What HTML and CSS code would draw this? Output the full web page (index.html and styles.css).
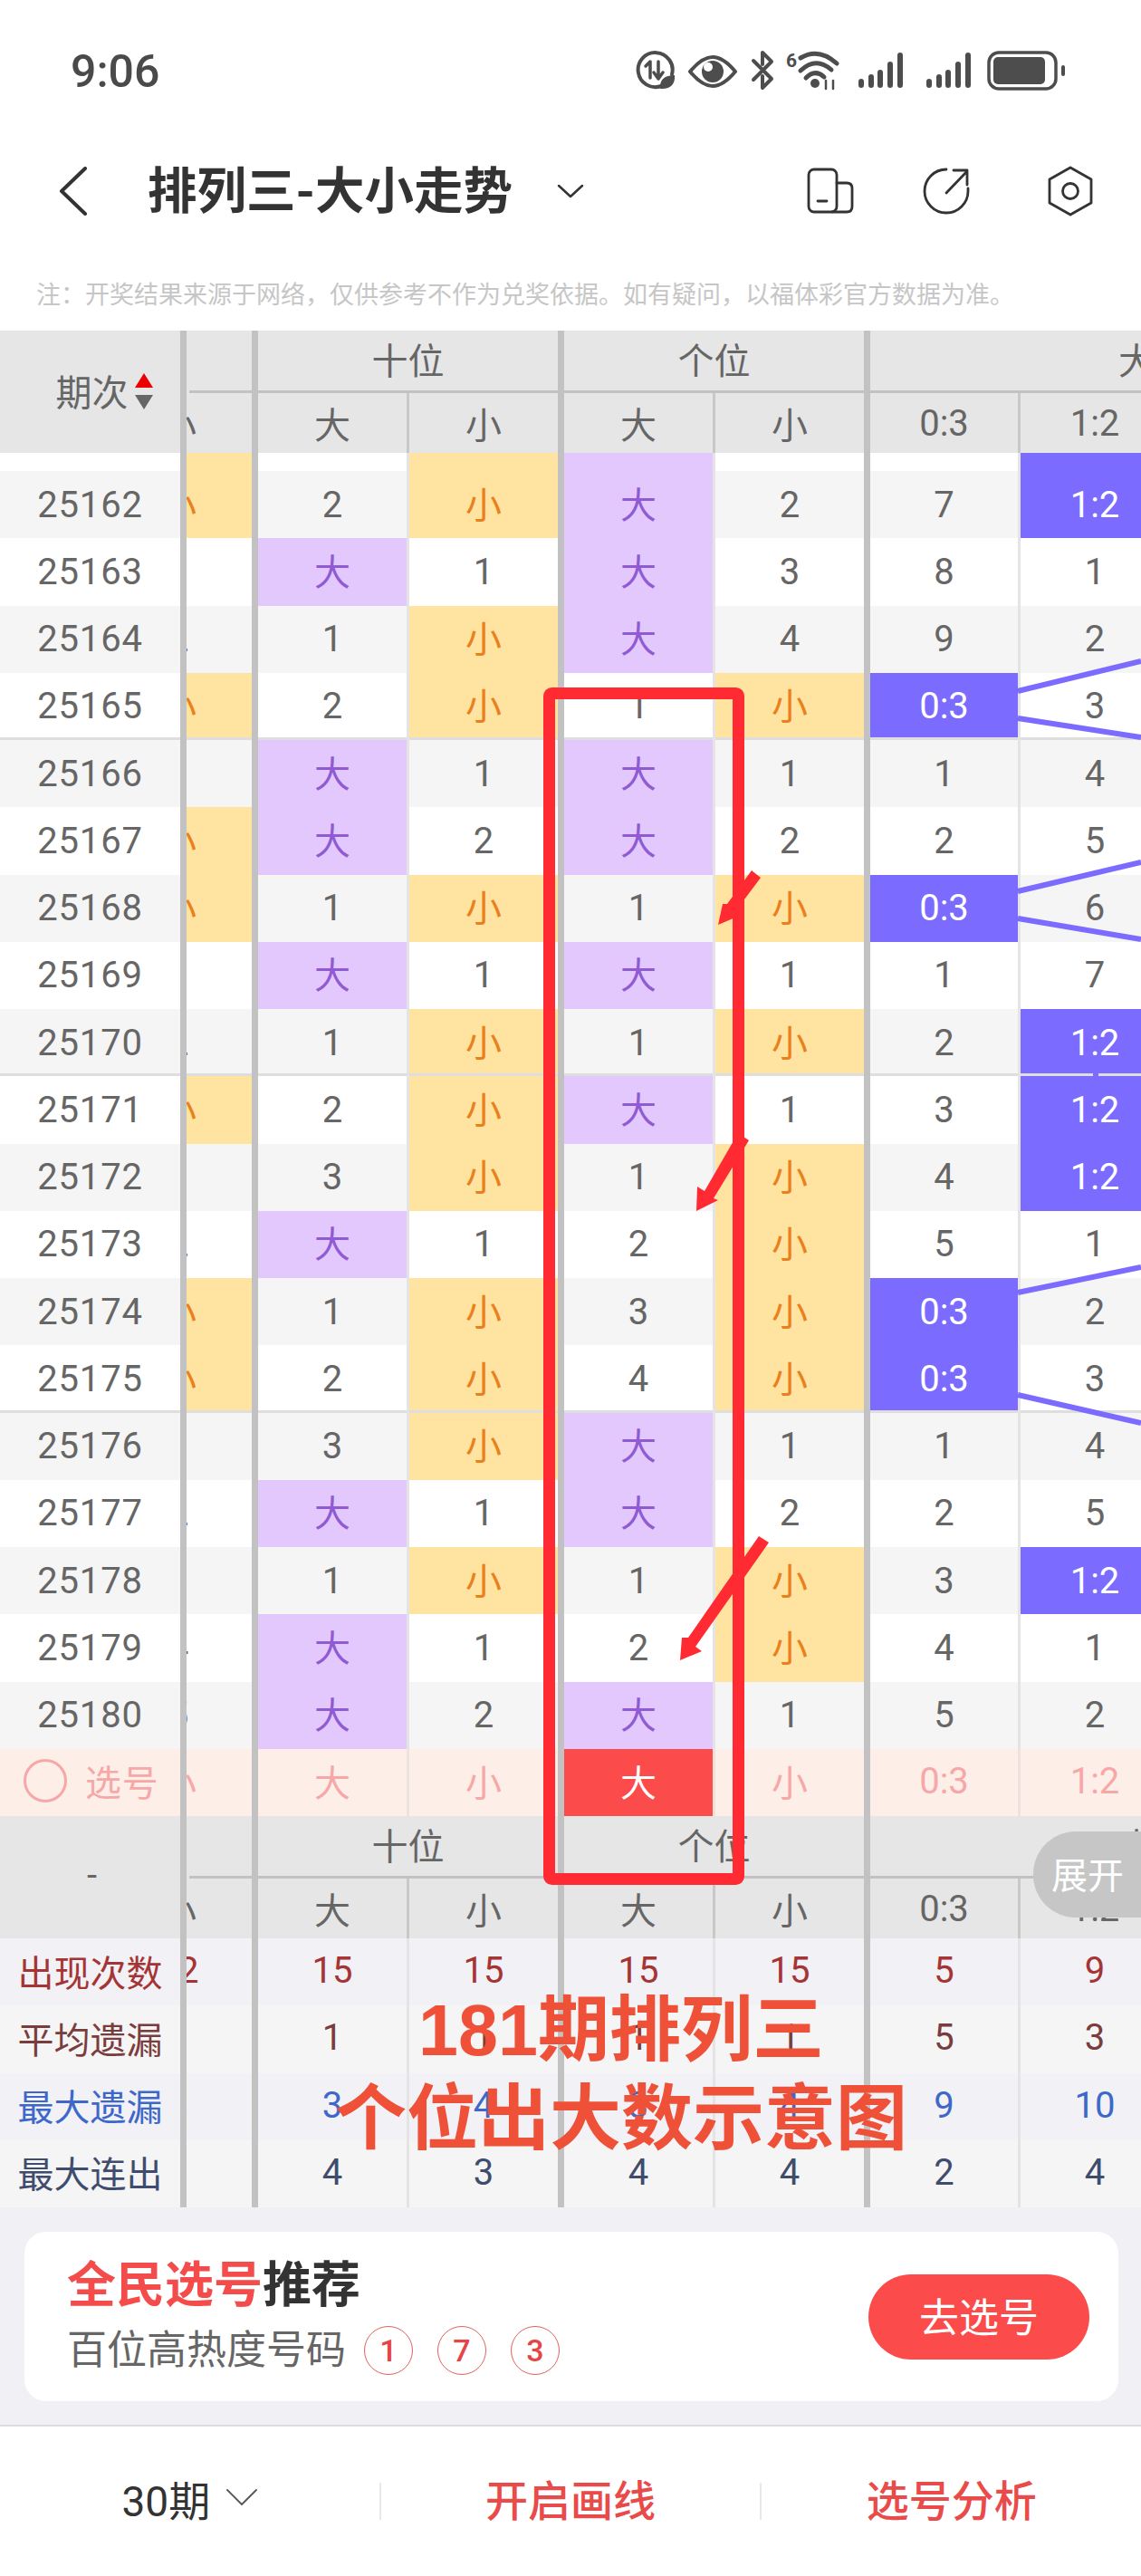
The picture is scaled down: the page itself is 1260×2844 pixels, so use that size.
FILE: index.html
```html
<!DOCTYPE html>
<html lang="zh-CN">
<head>
    <meta charset="UTF-8">
    <meta name="viewport" content="width=device-width, initial-scale=1.0">
    <title>排列三-大小走势</title>
    <link rel="stylesheet" href="styles.css">
</head>
<body>
    <div class="status-bar">
        <span class="status-time">9:06</span>
        <svg class="status-icons" width="520" height="60" viewBox="0 0 520 60" fill="none" stroke="#4d4d4d" stroke-linecap="round" stroke-linejoin="round">
            <path d="M50 55 A19 19 0 1 1 62 42" stroke-width="4"/>
            <path d="M33 33 L38 28 V46 M47 28 V46 M42 40 L47 47 L52 40" stroke-width="3.5"/>
            <path d="M49 58 C48 48 54 43 65 43 C66 53 60 59 49 58 Z" fill="#4d4d4d" stroke="none"/>
            <path d="M82 39 C92 27 100 23 107 23 C114 23 122 27 132 39 C122 51 114 55 107 55 C100 55 92 51 82 39 Z" stroke-width="4"/>
            <circle cx="107" cy="39" r="12" fill="#4d4d4d" stroke="none"/>
            <circle cx="102" cy="34" r="5" fill="#fff" stroke="none"/>
            <path d="M152 27 L172 47 L162 57 V44 M152 48 L172 28 L162 18 V31" stroke-width="4"/>
            <text x="188" y="34" fill="#4d4d4d" stroke="none" class="status-six">6</text>
            <path d="M204 24 Q224 12 244 30" stroke-width="5"/>
            <path d="M204 38 Q221 22 238 37" stroke-width="5"/>
            <path d="M210 46 Q220 36 230 45" stroke-width="5"/>
            <circle cx="220" cy="52" r="5" fill="#4d4d4d" stroke="none"/>
            <path d="M232 58 V49 M240 49 V58" stroke-width="2.5"/>
            <g stroke-width="6">
                <path d="M271 50 V54 M282 45 V54 M292 40 V54 M303 31 V54 M314 21 V54"/>
                <path d="M346 50 V54 M357 45 V54 M367 40 V54 M378 31 V54 M389 21 V54"/>
            </g>
            <rect x="412" y="18" width="74" height="40" rx="11" stroke-width="3.5"/>
            <rect x="417" y="23" width="57" height="30" rx="5" fill="#4d4d4d" stroke="none"/>
            <rect x="492" y="32" width="4" height="12" rx="2" fill="#4d4d4d" stroke="none"/>
        </svg>
    </div>

    <div class="nav-bar">
        <svg class="nav-back" width="31" height="54" viewBox="0 0 31 54" fill="none" stroke="#333" stroke-width="4" stroke-linecap="round" stroke-linejoin="round"><path d="M29 2 L3 27 L29 52"/></svg>
        <h1 class="nav-title">排列三-大小走势</h1>
        <svg class="nav-caret" width="30" height="16" viewBox="0 0 30 16" fill="none" stroke="#333" stroke-width="2.5" stroke-linecap="round" stroke-linejoin="round"><path d="M2 2 L15 14 L28 2"/></svg>
        <div class="nav-icons">
            <svg class="nav-icon" width="56" height="56" viewBox="0 0 56 56" fill="none" stroke="#333" stroke-width="2.8" stroke-linecap="round" stroke-linejoin="round">
                <rect x="4" y="4" width="31" height="47" rx="6"/>
                <path d="M35 19 H46 Q52 19 52 25 V45 Q52 51 46 51 H30"/>
                <path d="M14 39 H24"/>
            </svg>
            <svg class="nav-icon nav-icon-share" width="56" height="56" viewBox="0 0 56 56" fill="none" stroke="#333" stroke-width="2.8" stroke-linecap="round" stroke-linejoin="round">
                <path d="M27 4 A24 24 0 1 0 51 28 V25"/>
                <path d="M27 30 L50 6 M35 5 H50 V21"/>
            </svg>
            <svg class="nav-icon nav-icon-hex" width="56" height="56" viewBox="0 0 56 56" fill="none" stroke="#333" stroke-width="2.8" stroke-linecap="round" stroke-linejoin="round">
                <path d="M28 2 L51 15 V41 L28 54 L5 41 V15 Z"/>
                <circle cx="28" cy="28" r="8.5"/>
            </svg>
        </div>
    </div>

    <p class="notice">注：开奖结果来源于网络，仅供参考不作为兑奖依据。如有疑问，以福体彩官方数据为准。</p>

    <div class="trend-table">
        <div class="thead">
            <div class="th th-label"><span>期次</span><span class="sort-arrows"><i class="sort-up"></i><i class="sort-down"></i></span></div>
            <div class="th th-top th-gap"></div>
            <div class="th th-top th-two">十位</div>
            <div class="th th-top th-two">个位</div>
            <div class="th th-top th-four">大小比</div>
            <div class="th part"><span>小</span></div>
            <div class="th">大</div>
            <div class="th">小</div>
            <div class="th">大</div>
            <div class="th">小</div>
            <div class="th">0:3</div>
            <div class="th">1:2</div>
        </div>

        <div class="rows">
            <div class="row row-cut"><div class="cell"></div><div class="cell part small"></div><div class="cell"></div><div class="cell small"></div><div class="cell big"></div><div class="cell"></div><div class="cell"></div><div class="cell hit"></div></div>
            <div class="row"><div class="cell">25162</div><div class="cell part small"><span>小</span></div><div class="cell">2</div><div class="cell small">小</div><div class="cell big">大</div><div class="cell">2</div><div class="cell">7</div><div class="cell hit">1:2</div></div>
            <div class="row"><div class="cell">25163</div><div class="cell part"><span>1</span></div><div class="cell big">大</div><div class="cell">1</div><div class="cell big">大</div><div class="cell">3</div><div class="cell">8</div><div class="cell">1</div></div>
            <div class="row"><div class="cell">25164</div><div class="cell part"><span>2</span></div><div class="cell">1</div><div class="cell small">小</div><div class="cell big">大</div><div class="cell">4</div><div class="cell">9</div><div class="cell">2</div></div>
            <div class="row row-end"><div class="cell">25165</div><div class="cell part small"><span>小</span></div><div class="cell">2</div><div class="cell small">小</div><div class="cell">1</div><div class="cell small">小</div><div class="cell hit">0:3</div><div class="cell">3</div></div>
            <div class="row"><div class="cell">25166</div><div class="cell part"><span>1</span></div><div class="cell big">大</div><div class="cell">1</div><div class="cell big">大</div><div class="cell">1</div><div class="cell">1</div><div class="cell">4</div></div>
            <div class="row"><div class="cell">25167</div><div class="cell part small"><span>小</span></div><div class="cell big">大</div><div class="cell">2</div><div class="cell big">大</div><div class="cell">2</div><div class="cell">2</div><div class="cell">5</div></div>
            <div class="row"><div class="cell">25168</div><div class="cell part small"><span>小</span></div><div class="cell">1</div><div class="cell small">小</div><div class="cell">1</div><div class="cell small">小</div><div class="cell hit">0:3</div><div class="cell">6</div></div>
            <div class="row"><div class="cell">25169</div><div class="cell part"><span>1</span></div><div class="cell big">大</div><div class="cell">1</div><div class="cell big">大</div><div class="cell">1</div><div class="cell">1</div><div class="cell">7</div></div>
            <div class="row row-end"><div class="cell">25170</div><div class="cell part"><span>2</span></div><div class="cell">1</div><div class="cell small">小</div><div class="cell">1</div><div class="cell small">小</div><div class="cell">2</div><div class="cell hit">1:2</div></div>
            <div class="row"><div class="cell">25171</div><div class="cell part small"><span>小</span></div><div class="cell">2</div><div class="cell small">小</div><div class="cell big">大</div><div class="cell">1</div><div class="cell">3</div><div class="cell hit">1:2</div></div>
            <div class="row"><div class="cell">25172</div><div class="cell part"><span>1</span></div><div class="cell">3</div><div class="cell small">小</div><div class="cell">1</div><div class="cell small">小</div><div class="cell">4</div><div class="cell hit">1:2</div></div>
            <div class="row"><div class="cell">25173</div><div class="cell part"><span>2</span></div><div class="cell big">大</div><div class="cell">1</div><div class="cell">2</div><div class="cell small">小</div><div class="cell">5</div><div class="cell">1</div></div>
            <div class="row"><div class="cell">25174</div><div class="cell part small"><span>小</span></div><div class="cell">1</div><div class="cell small">小</div><div class="cell">3</div><div class="cell small">小</div><div class="cell hit">0:3</div><div class="cell">2</div></div>
            <div class="row row-end"><div class="cell">25175</div><div class="cell part small"><span>小</span></div><div class="cell">2</div><div class="cell small">小</div><div class="cell">4</div><div class="cell small">小</div><div class="cell hit">0:3</div><div class="cell">3</div></div>
            <div class="row"><div class="cell">25176</div><div class="cell part"><span>1</span></div><div class="cell">3</div><div class="cell small">小</div><div class="cell big">大</div><div class="cell">1</div><div class="cell">1</div><div class="cell">4</div></div>
            <div class="row"><div class="cell">25177</div><div class="cell part"><span>2</span></div><div class="cell big">大</div><div class="cell">1</div><div class="cell big">大</div><div class="cell">2</div><div class="cell">2</div><div class="cell">5</div></div>
            <div class="row"><div class="cell">25178</div><div class="cell part"><span>3</span></div><div class="cell">1</div><div class="cell small">小</div><div class="cell">1</div><div class="cell small">小</div><div class="cell">3</div><div class="cell hit">1:2</div></div>
            <div class="row"><div class="cell">25179</div><div class="cell part"><span>4</span></div><div class="cell big">大</div><div class="cell">1</div><div class="cell">2</div><div class="cell small">小</div><div class="cell">4</div><div class="cell">1</div></div>
            <div class="row"><div class="cell">25180</div><div class="cell part"><span>5</span></div><div class="cell big">大</div><div class="cell">2</div><div class="cell big">大</div><div class="cell">1</div><div class="cell">5</div><div class="cell">2</div></div>
            <div class="row row-pick"><div class="cell pick-label"><i class="pick-ring"></i><span>选号</span></div><div class="cell part"><span>小</span></div><div class="cell">大</div><div class="cell">小</div><div class="cell pick-on">大</div><div class="cell">小</div><div class="cell">0:3</div><div class="cell">1:2</div></div>
        </div>

        <div class="thead">
            <div class="th th-label">-</div>
            <div class="th th-top th-gap"></div>
            <div class="th th-top th-two">十位</div>
            <div class="th th-top th-two">个位</div>
            <div class="th th-top th-four">大小比</div>
            <div class="th part"><span>小</span></div>
            <div class="th">大</div>
            <div class="th">小</div>
            <div class="th">大</div>
            <div class="th">小</div>
            <div class="th">0:3</div>
            <div class="th">1:2</div>
        </div>

        <div class="stats">
            <div class="row stat-count"><div class="cell">出现次数</div><div class="cell part"><span>12</span></div><div class="cell">15</div><div class="cell">15</div><div class="cell">15</div><div class="cell">15</div><div class="cell">5</div><div class="cell">9</div></div>
            <div class="row stat-avg"><div class="cell">平均遗漏</div><div class="cell part"><span>1</span></div><div class="cell">1</div><div class="cell">1</div><div class="cell">1</div><div class="cell">1</div><div class="cell">5</div><div class="cell">3</div></div>
            <div class="row stat-max"><div class="cell">最大遗漏</div><div class="cell part"><span>3</span></div><div class="cell">3</div><div class="cell">4</div><div class="cell">3</div><div class="cell">4</div><div class="cell">9</div><div class="cell">10</div></div>
            <div class="row stat-run"><div class="cell">最大连出</div><div class="cell part"><span>3</span></div><div class="cell">4</div><div class="cell">3</div><div class="cell">4</div><div class="cell">4</div><div class="cell">2</div><div class="cell">4</div></div>
        </div>
    </div>

    <div class="promo">
        <div class="promo-card">
            <div class="promo-text">
                <div class="promo-title"><span class="promo-red">全民选号</span>推荐</div>
                <div class="promo-sub">百位高热度号码
                    <span class="balls"><span class="ball">1</span><span class="ball">7</span><span class="ball">3</span></span>
                </div>
            </div>
            <button class="promo-btn">去选号</button>
        </div>
    </div>

    <div class="bottom-bar">
        <div class="bottom-item bottom-period">30期
            <svg width="34" height="19" viewBox="0 0 34 19" fill="none" stroke="#555" stroke-width="1.8" stroke-linecap="round" stroke-linejoin="round"><path d="M1 1 L17 17 L33 1"/></svg>
        </div>
        <div class="bottom-item bottom-link">开启画线</div>
        <div class="bottom-item bottom-link">选号分析</div>
    </div>

    <!-- hand drawn marks on top of the screenshot -->
    <svg class="marks" width="1260" height="2844" viewBox="0 0 1260 2844" fill="none">
        <g stroke="#7b6bff" stroke-width="6">
            <path d="M1124 763 L1260 730 M1124 793 L1260 814"/>
            <path d="M1124 984 L1260 952 M1124 1014 L1260 1037"/>
            <path d="M1124 1427 L1260 1399 M1124 1540 L1260 1571"/>
            <path d="M1210 1180 V1196"/>
        </g>
        <rect x="606.5" y="765.5" width="209" height="1309" rx="3" stroke="#ff2a32" stroke-width="13"/>
        <g fill="#ff2a32">
            <polygon points="830,961 840,969 813,1005 819,1010 793,1021 798,998 803,998"/>
            <polygon points="815,1251 827,1259 788,1323 793,1325 769,1337 770,1310 778,1315"/>
            <polygon points="838,1696 849,1703 768,1818 775,1823 751,1833 753,1808 760,1808"/>
        </g>
    </svg>

    <div class="expand-tab">展开</div>

    <div class="caption">181期排列三<br>个位出大数示意图</div>
</body>
</html>
```

FILE: styles.css
```css
* {
    box-sizing: border-box;
}
html, body {
    margin: 0;
    padding: 0;
}
body {
    position: relative;
    width: 1260px;
    height: 2844px;
    overflow: hidden;
    background: #fff;
    color: #666;
    font-family: Roboto, "Noto Sans CJK SC", sans-serif;
}

/* top of the phone */
.status-bar {
    height: 158px;
    padding: 0 60px 0 78px;
    display: flex;
    justify-content: space-between;
    align-items: center;
}
.status-time {
    font-size: 50px;
    font-weight: 500;
    color: #4a4a4a;
}
.status-icons {
    display: block;
    margin-bottom: 18px;
}
.status-six {
    font-family: Roboto, sans-serif;
    font-size: 21px;
    font-weight: 700;
}

.nav-bar {
    height: 106px;
    padding: 0 50px 0 65px;
    display: flex;
    align-items: center;
}
.nav-title {
    margin: 0 0 0 67px;
    font-size: 54.5px;
    line-height: 66px;
    font-weight: 700;
    color: #333;
    white-space: nowrap;
}
.nav-caret {
    margin-left: 49px;
}
.nav-icons {
    margin-left: auto;
    display: flex;
    align-items: center;
}
.nav-icon-share {
    margin-left: 73px;
}
.nav-icon-hex {
    margin-left: 80px;
}

.notice {
    height: 101px;
    margin: 0;
    padding: 42px 0 0 40px;
    font-size: 27px;
    line-height: 40px;
    color: #c6c6c6;
    white-space: nowrap;
}

/* trend table */
.trend-table {
    width: 1260px;
    overflow: hidden;
}
.thead,
.row {
    display: grid;
    grid-template-columns: 206px 79px 167px 171px 167px 171px 166px 171px 167px 171px;
}
.thead {
    grid-template-rows: 69px 66px;
    background: #e6e6e6;
}
.row {
    height: 74.26px;
    font-size: 40px;
}
.row:nth-child(even) {
    background: #f5f5f5;
}
.row-cut {
    height: 20px;
}

.cell,
.th {
    display: flex;
    justify-content: center;
    align-items: center;
    border-right: 3px solid #e4e4e4;
    white-space: nowrap;
    min-width: 0;
}
.th {
    font-size: 40px;
    border-right-color: #c8c8c8;
}
.cell:nth-child(1),
.cell:nth-child(2),
.cell:nth-child(4),
.cell:nth-child(6),
.cell:nth-child(8),
.th-label,
.th-top,
.thead .part {
    border-right: 7px solid #c2c2c2;
}
.thead .th:nth-child(n+8):nth-child(even) {
    border-right: 7px solid #c2c2c2;
}
.rows .cell:first-child {
    letter-spacing: 0.8px;
}
.th-label {
    grid-row: span 2;
    padding: 0 0 4px 4px;
}
.th-top {
    border-bottom: 3px solid #c2c2c2;
    padding-bottom: 5px;
}
.th-gap {
    margin-left: 3px;
}
.th-two {
    grid-column: span 2;
}
.th-four {
    grid-column: span 4;
}
.sort-arrows {
    position: absolute;
    left: 149px;
    top: 412px;
    display: flex;
    flex-direction: column;
    gap: 8px;
}
.sort-up {
    border-left: 10px solid transparent;
    border-right: 10px solid transparent;
    border-bottom: 16px solid #ee0000;
}
.sort-down {
    border-left: 10px solid transparent;
    border-right: 10px solid transparent;
    border-top: 16px solid #666;
}

/* half hidden column under the fixed one */
.part {
    justify-content: flex-end;
    overflow: hidden;
}
.part span {
    flex: none;
    width: 162px;
    text-align: center;
}

.big {
    background: #e2c8fd;
    color: #8f5ad2;
    padding-bottom: 5px;
}
.small {
    background: #ffe3a1;
    color: #e9801c;
    padding-bottom: 5px;
}
.hit {
    background: #7b6bff;
    color: #fff;
}
.row-end .cell {
    box-shadow: inset 0 -3px 0 #dedede;
}

.row-pick {
    background: #feeee8;
    color: #f6a8a8;
}
.row-pick .cell {
    padding-bottom: 3px;
}
.row-pick .cell:nth-child(n+3):nth-child(odd) {
    border-right-color: #ece2de;
}
.pick-label {
    justify-content: flex-start;
    padding-left: 26px;
    gap: 20px;
}
.pick-ring {
    width: 48px;
    height: 48px;
    border: 3px solid #f6a8a8;
    border-radius: 50%;
}
.pick-on {
    background: #fb4b4b;
    color: #fff;
}

.stats .cell {
    padding-bottom: 3px;
}
.stats .row:nth-child(odd) {
    background: #f1f1f6;
}
.stats .row:nth-child(even) {
    background: #f5f5f5;
}
.stat-count {
    color: #a53434;
}
.stat-avg {
    color: #7a3d3d;
}
.stat-max {
    color: #3d68c9;
}
.stat-run {
    color: #3f4c6e;
}

/* promo card */
.promo {
    height: 242px;
    padding: 27px 25px 26px 27px;
    background: #f1f1f5;
    border-bottom: 2px solid #dcdcdc;
}
.promo-card {
    height: 187px;
    padding: 0 32px 0 47px;
    display: flex;
    justify-content: space-between;
    align-items: center;
    background: #fff;
    border-radius: 24px;
}
.promo-title {
    font-size: 54px;
    line-height: 62px;
    font-weight: 700;
    color: #333;
}
.promo-red {
    color: #f44b4b;
}
.promo-sub {
    margin-top: 13px;
    display: flex;
    align-items: center;
    font-size: 44px;
    line-height: 54px;
    color: #666;
}
.balls {
    margin-left: 20px;
    display: flex;
    gap: 27px;
}
.ball {
    width: 54px;
    height: 54px;
    display: flex;
    justify-content: center;
    align-items: center;
    border: 1.5px solid #e06060;
    border-radius: 50%;
    font-size: 34px;
    font-weight: 500;
    color: #e64545;
}
.promo-btn {
    width: 244px;
    height: 94px;
    padding: 0 0 3px;
    border: none;
    border-radius: 47px;
    background: #fb4b4b;
    color: #fff;
    font-family: inherit;
    font-size: 44px;
}

/* bottom actions */
.bottom-bar {
    height: 165px;
    display: flex;
    align-items: center;
}
.bottom-item {
    flex: 1;
    height: 41px;
    padding-bottom: 8px;
    display: flex;
    justify-content: center;
    align-items: center;
    font-size: 47px;
}
.bottom-item + .bottom-item {
    border-left: 2px solid #e8e8e8;
}
.bottom-period {
    gap: 18px;
    color: #333;
    font-size: 46px;
}
.bottom-link {
    font-weight: 500;
    color: #e94a4a;
}

/* things lying over the page */
.marks {
    position: absolute;
    left: 0;
    top: 0;
    pointer-events: none;
}
.expand-tab {
    position: absolute;
    right: 0;
    top: 2022px;
    width: 119px;
    height: 95px;
    padding: 0 0 4px 20px;
    display: flex;
    align-items: center;
    border-radius: 47px 0 0 47px;
    background: #c6c6c6;
    color: #fff;
    font-size: 40px;
}
.caption {
    position: absolute;
    left: 274px;
    top: 2193px;
    width: 824px;
    text-align: center;
    font-family: "Liberation Sans", "Noto Sans CJK SC", sans-serif;
    font-size: 79px;
    line-height: 98px;
    font-weight: 700;
    color: #ee5038;
}
```
